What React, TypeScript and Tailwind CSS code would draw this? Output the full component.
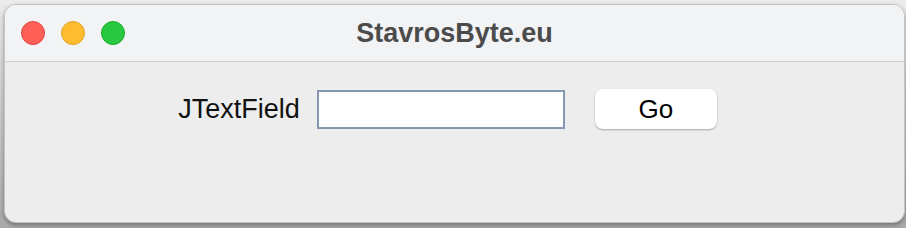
const lights = [
  { bg: 'bg-[#fe5f57]', ring: 'border-[#e0443e]' },
  { bg: 'bg-[#febc2e]', ring: 'border-[#dea123]' },
  { bg: 'bg-[#28c840]', ring: 'border-[#1aab29]' },
]

export default function App() {
  return (
    <div className="h-[228px] w-[906px] bg-gradient-to-b from-[#ececec] to-[#a9a9a9] pl-[4px] pt-[4px]">
      <div className="flex h-[219px] w-[901px] flex-col overflow-hidden rounded-[12px] border border-[#c4c4c4] shadow-[0_2px_4px_rgba(0,0,0,0.35)]">
        <div className="relative flex h-[57px] shrink-0 items-center gap-[16px] border-b border-[#cfcfcf] bg-[#f2f3f5] pl-[16px]">
          {lights.map((l, i) => (
            <span key={i} className={`h-[24px] w-[24px] rounded-full border ${l.bg} ${l.ring}`} />
          ))}
          <div className="pointer-events-none absolute inset-0 flex items-center justify-center">
            <span className="font-['Liberation_Sans',Arial,sans-serif] text-[27px] font-bold text-[#4b4b4b]">
              StavrosByte.eu
            </span>
          </div>
        </div>
        <div className="flex flex-1 justify-center bg-[#ededed] pr-[14px] pt-[27px]">
          <div className="flex h-[40px] items-center font-['Liberation_Sans',Arial,sans-serif] text-[26px] text-[#111]">
            <span className="text-[27px]">JTextField</span>
            <input
              type="text"
              className="ml-[17px] h-[39px] w-[248px] border-2 border-[#8598b2] bg-white px-2 outline-none"
            />
            <button
              type="button"
              className="ml-[30px] h-[40px] w-[122px] rounded-[8px] bg-white text-[26px] text-black shadow-[0_1px_2px_rgba(0,0,0,0.3)]"
            >
              Go
            </button>
          </div>
        </div>
      </div>
    </div>
  )
}
